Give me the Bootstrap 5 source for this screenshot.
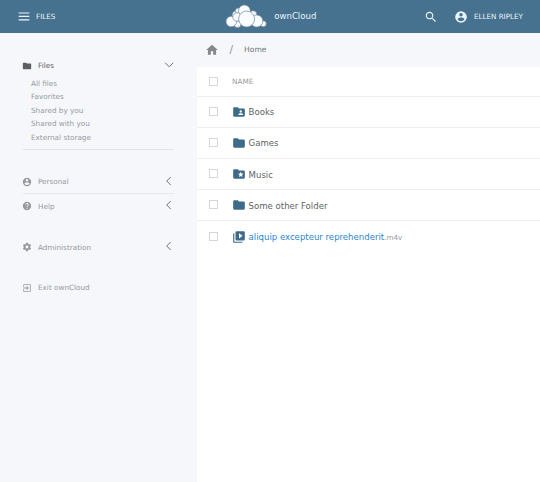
<!DOCTYPE html>
<html lang="en">
<head>
<meta charset="utf-8">
<meta name="viewport" content="width=device-width, initial-scale=1">
<title>ownCloud</title>
<link href="https://cdn.jsdelivr.net/npm/bootstrap@5.3.0/dist/css/bootstrap.min.css" rel="stylesheet">
<style>
body{font-family:"DejaVu Sans",sans-serif;font-size:7.25px;line-height:13.4px;color:#969a9e;background:#fff;height:482px;overflow:hidden}
svg{display:block;flex:none}
.topbar{height:33px;background:#46718f;color:#e9f5fb;font-size:7.2px}
.topbar .side{flex:1 1 0}
.side.start{padding-left:18px;gap:6px}
.side.end{padding-right:17px}
.avatar{margin:0 6px 0 16px}
.brand{font-family:"DejaVu Sans Condensed","DejaVu Sans",sans-serif;font-stretch:condensed;font-size:9.5px;gap:7.2px;padding-left:.4px}
.brand span{margin-top:-1px}
.main{height:449px}
.sidenav{width:197px;background:#f5f7fa;padding:26px 23px 0}
.entry{height:14px}
.entry svg.ico{margin:0 6px 0 -1px;width:10px;height:10px}
.entry.current{color:#5c6063}
.sub{padding:4px 0 5px 8px;border-bottom:1px solid #e1e4e7;margin-bottom:25px}
.entry.ruled{height:19px;border-bottom:1px solid #e6e9ec;padding-bottom:4px}
.entry.help{margin-top:5.4px}
.entry.admin{margin-top:27px}
.entry.exit{margin-top:26.6px}
.chev{margin-left:auto;margin-top:-3px;color:#6c7074}
.crumbs{height:34px;background:#f5f7fa;color:#74787b;padding-left:8px;font-size:7.6px}
.crumbs svg{color:#85898c}
.slash{margin:0 11px 0 10.5px;color:#8f9397;font-size:10.5px}
.file-row{height:31.1px;border-bottom:1px solid #eceff2;padding-left:12px}
.file-row:last-child{border:0}
.file-row.head{height:30px}
.tick{width:9px;height:9px;border:1px solid #d5d8da;border-radius:0;margin:-1px 14px 0 0;background:#fff;appearance:none}
.kind{color:#3f6b8b;width:14px;height:14px;margin:-.6px 0 0}
.fname{font-family:"DejaVu Sans Condensed","DejaVu Sans",sans-serif;font-stretch:condensed;font-size:9.5px;color:#606366;margin-left:2.6px}
.fname.link{color:#2a87cd}
.ext{font-size:7.2px;padding-top:1px}
</style>
<script src="https://cdn.jsdelivr.net/npm/bootstrap@5.3.0/dist/js/bootstrap.bundle.min.js"></script>
</head>
<body>
<svg class="d-none">
<symbol id="folder" viewBox="0 0 24 24"><path fill="currentColor" d="M10 4H4a2 2 0 0 0-2 2v12a2 2 0 0 0 2 2h16a2 2 0 0 0 2-2V8a2 2 0 0 0-2-2h-8z"/></symbol>
<symbol id="person" viewBox="0 0 24 24"><path fill="currentColor" fill-rule="evenodd" d="M12 2a10 10 0 1 0 0 20 10 10 0 0 0 0-20zm0 3a3 3 0 1 1 0 6 3 3 0 0 1 0-6zm0 14.2a7.2 7.2 0 0 1-6-3.22c.03-1.99 4-3.08 6-3.08s5.97 1.09 6 3.08a7.2 7.2 0 0 1-6 3.22z"/></symbol>
<symbol id="left" viewBox="0 0 10 10"><path d="M6.7 1 2.7 5l4 4" fill="none" stroke="currentColor" stroke-width="1"/></symbol>
</svg>
<header class="topbar d-flex align-items-center">
  <div class="side start d-flex align-items-center">
    <svg width="12" height="9" viewBox="0 0 12 9"><path d="M.7 1h10.6M.7 4.4h10.6M.7 7.8h10.6" stroke="currentColor" stroke-width="1.2"/></svg>
    <span>FILES</span>
  </div>
  <div class="brand d-flex align-items-center">
    <svg width="42" height="25" viewBox="0 0 42 25"><g fill="#fafdff" stroke="#6e8799" stroke-width=".7"><circle cx="11.5" cy="11.2" r="4.4"/><circle cx="12.5" cy="20.2" r="3.4"/><circle cx="28" cy="10.5" r="3.8"/><circle cx="13.2" cy="6.7" r="2.7"/><circle cx="19.4" cy="6.8" r="5.9"/><circle cx="6.3" cy="17.5" r="5.3"/><circle cx="12" cy="13" r="4.2"/><circle cx="38.3" cy="19.8" r="3"/><circle cx="31.8" cy="17" r="6.1"/><circle cx="21.6" cy="15" r="8"/></g></svg>
    <span>ownCloud</span>
  </div>
  <div class="side end d-flex align-items-center justify-content-end">
    <svg width="14" height="14" viewBox="0 0 24 24"><path fill="currentColor" d="M15.5 14h-.79l-.28-.27A6.5 6.5 0 1 0 13.73 14.43l.27.28v.79l5 5 1.5-1.5zm-6 0a4.5 4.5 0 1 1 0-9 4.5 4.5 0 0 1 0 9z"/></svg>
    <svg class="avatar" width="14" height="14"><use href="#person"/></svg>
    <span>ELLEN RIPLEY</span>
  </div>
</header>
<div class="main d-flex">
  <nav class="sidenav">
    <div class="entry current d-flex align-items-center"><svg class="ico"><use href="#folder"/></svg><span>Files</span><svg class="chev" width="10" height="10" viewBox="0 0 10 10"><path d="m1.2 2.8 4 4 4-4" fill="none" stroke="currentColor"/></svg></div>
    <div class="sub"><div>All files</div><div>Favorites</div><div>Shared by you</div><div>Shared with you</div><div>External storage</div></div>
    <div class="entry ruled d-flex align-items-center"><svg class="ico"><use href="#person"/></svg><span>Personal</span><svg class="chev" width="10" height="10"><use href="#left"/></svg></div>
    <div class="entry help d-flex align-items-center"><svg class="ico" viewBox="0 0 24 24"><path fill="currentColor" d="M12 2a10 10 0 1 0 0 20 10 10 0 0 0 0-20zm1 17h-2v-2h2zm2.07-7.75-.9.92C13.45 12.9 13 13.5 13 15h-2v-.5c0-1.1.45-2.1 1.17-2.83l1.24-1.26A2 2 0 1 0 10 9H8a4 4 0 1 1 7.07 2.25z"/></svg><span>Help</span><svg class="chev" width="10" height="10"><use href="#left"/></svg></div>
    <div class="entry admin d-flex align-items-center"><svg class="ico" viewBox="0 0 24 24"><path fill="currentColor" d="M19.43 12.98c.04-.32.07-.64.07-.98s-.03-.66-.07-.98l2.11-1.65a.5.5 0 0 0 .12-.64l-2-3.46a.5.5 0 0 0-.61-.22l-2.49 1a7.3 7.3 0 0 0-1.69-.98l-.38-2.65A.49.49 0 0 0 14 2h-4a.49.49 0 0 0-.49.42l-.38 2.65c-.61.25-1.17.59-1.69.98l-2.49-1a.49.49 0 0 0-.61.22l-2 3.46a.49.49 0 0 0 .12.64l2.11 1.65c-.04.32-.07.65-.07.98s.03.66.07.98l-2.11 1.65a.5.5 0 0 0-.12.64l2 3.46c.12.22.39.3.61.22l2.49-1c.52.4 1.08.73 1.69.98l.38 2.65c.03.24.24.42.49.42h4c.25 0 .46-.18.49-.42l.38-2.65c.61-.25 1.17-.59 1.69-.98l2.49 1c.23.09.49 0 .61-.22l2-3.46a.5.5 0 0 0-.12-.64zM12 15.5a3.5 3.5 0 1 1 0-7 3.5 3.5 0 0 1 0 7z"/></svg><span>Administration</span><svg class="chev" width="10" height="10"><use href="#left"/></svg></div>
    <div class="entry exit d-flex align-items-center"><svg class="ico" viewBox="0 0 24 24"><path fill="currentColor" d="M10.09 15.59 11.5 17l5-5-5-5-1.41 1.41L12.67 11H3v2h9.67zM19 3H5a2 2 0 0 0-2 2v4h2V5h14v14H5v-4H3v4a2 2 0 0 0 2 2h14a2 2 0 0 0 2-2V5a2 2 0 0 0-2-2z"/></svg><span>Exit ownCloud</span></div>
  </nav>
  <main class="flex-fill">
    <div class="crumbs d-flex align-items-center"><svg width="14" height="14" viewBox="0 0 24 24"><path fill="currentColor" d="M10 20v-6h4v6h5v-8h3L12 3 2 12h3v8z"/></svg><span class="slash">/</span><span>Home</span></div>
    <div class="file-row head d-flex align-items-center"><input class="tick" type="checkbox"><span>NAME</span></div>
    <div class="file-row d-flex align-items-center"><input class="tick" type="checkbox"><svg class="kind" viewBox="0 0 24 24"><path fill="currentColor" fill-rule="evenodd" d="M20 6h-8l-2-2H4a2 2 0 0 0-2 2v12a2 2 0 0 0 2 2h16a2 2 0 0 0 2-2V8a2 2 0 0 0-2-2zm-5 3a2 2 0 1 1 0 4 2 2 0 0 1 0-4zm4 8h-8v-1c0-1.33 2.67-2 4-2s4 .67 4 2z"/></svg><span class="fname">Books</span></div>
    <div class="file-row d-flex align-items-center"><input class="tick" type="checkbox"><svg class="kind"><use href="#folder"/></svg><span class="fname">Games</span></div>
    <div class="file-row d-flex align-items-center"><input class="tick" type="checkbox"><svg class="kind" viewBox="0 0 24 24"><path fill="currentColor" fill-rule="evenodd" d="M20 6h-8l-2-2H4a2 2 0 0 0-2 2v12a2 2 0 0 0 2 2h16a2 2 0 0 0 2-2V8a2 2 0 0 0-2-2zm-2.06 11L15 15.28 12.06 17l.78-3.33-2.59-2.24 3.41-.29L15 8l1.34 3.14 3.41.29-2.59 2.24z"/></svg><span class="fname">Music</span></div>
    <div class="file-row d-flex align-items-center"><input class="tick" type="checkbox"><svg class="kind"><use href="#folder"/></svg><span class="fname">Some other Folder</span></div>
    <div class="file-row d-flex align-items-center"><input class="tick" type="checkbox"><svg class="kind" viewBox="0 0 24 24"><path fill="currentColor" fill-rule="evenodd" d="M4 6H2v14a2 2 0 0 0 2 2h14v-2H4zm16-4H8a2 2 0 0 0-2 2v12a2 2 0 0 0 2 2h12a2 2 0 0 0 2-2V4a2 2 0 0 0-2-2zm-8 12.5v-9l6 4.5z"/></svg><span class="fname link">aliquip excepteur reprehenderit</span><span class="ext">.m4v</span></div>
  </main>
</div>
</body>
</html>
